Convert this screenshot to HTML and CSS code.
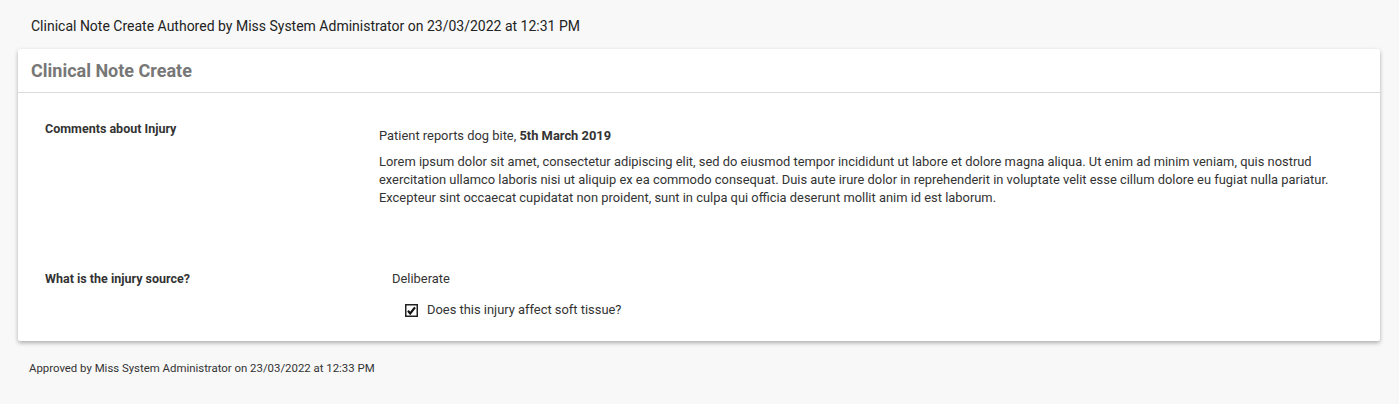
FILE: index.html
```html
<!DOCTYPE html>
<html lang="en">
<head>
<meta charset="utf-8">
<title>Clinical Note Create</title>
<link rel="stylesheet" href="styles.css">
</head>
<body>
  <div class="page-title">Clinical Note Create Authored by Miss System Administrator on 23/03/2022 at 12:31 PM</div>
  <section class="card">
    <header class="card-header">Clinical Note Create</header>
    <div class="card-body">
      <div class="field">
        <div class="field-label">Comments about Injury</div>
        <div class="field-value rich">
          <p>Patient reports dog bite, <strong>5th March 2019</strong></p>
          <p>Lorem ipsum dolor sit amet, consectetur adipiscing elit, sed do eiusmod tempor incididunt ut labore et dolore magna aliqua. Ut enim ad minim veniam, quis nostrud exercitation ullamco laboris nisi ut aliquip ex ea commodo consequat. Duis aute irure dolor in reprehenderit in voluptate velit esse cillum dolore eu fugiat nulla pariatur. Excepteur sint occaecat cupidatat non proident, sunt in culpa qui officia deserunt mollit anim id est laborum.</p>
        </div>
      </div>
      <div class="field second">
        <div class="field-label">What is the injury source?</div>
        <div class="field-value">
          <div class="answer">Deliberate</div>
          <div class="check-row">
            <span class="checkbox"><svg width="13" height="13" viewBox="0 0 13 13"><rect x="0.75" y="0.75" width="11.5" height="11.5" fill="#fff" stroke="#222" stroke-width="1.5"/><path d="M3 6.8 L5.2 9.4 L10 3.4" fill="none" stroke="#111" stroke-width="2.2"/></svg></span>
            <span>Does this injury affect soft tissue?</span>
          </div>
        </div>
      </div>
    </div>
  </section>
  <div class="footer-note">Approved by Miss System Administrator on 23/03/2022 at 12:33 PM</div>
</body>
</html>
```
FILE: styles.css
```css
html, body {
  margin: 0;
  padding: 0;
  background: #f8f8f8;
  font-family: Roboto, "Liberation Sans", Arial, sans-serif;
  color: #333;
}

.page-title {
  padding: 18px 31px 0;
  font-size: 14px;
  line-height: 16px;
  color: #222;
}

.card {
  margin: 15px 19px 0 18px;
  background: #fff;
  border-radius: 2px;
  box-shadow: 0 2px 4px rgba(0, 0, 0, 0.3);
}

.card-header {
  height: 43px;
  display: flex;
  align-items: center;
  padding-left: 13px;
  border-bottom: 1px solid #dcdcdc;
  font-size: 18px;
  font-weight: 700;
  color: #777;
}

.card-body {
  padding: 27px 40px 22px 27px;
}

.field {
  display: grid;
  grid-template-columns: 334px 1fr;
  font-size: 12.9px;
  line-height: 18px;
}

.field.second {
  margin-top: 63px;
}

.field-label {
  font-size: 12.5px;
  font-weight: 700;
  color: #333;
}

.field-value p {
  margin: 0 0 8px;
}

.field-value p:last-child {
  margin-bottom: 0;
}

.rich {
  padding-top: 7px;
}

.rich strong {
  font-weight: 700;
}

.answer {
  padding-left: 13px;
}

.check-row {
  display: flex;
  align-items: center;
  gap: 9px;
  padding-left: 26px;
  margin-top: 13px;
}

.checkbox {
  display: inline-flex;
  width: 13px;
  height: 13px;
}

.footer-note {
  padding: 20px 29px;
  font-size: 11.4px;
  line-height: 14px;
  color: #333;
}
```
